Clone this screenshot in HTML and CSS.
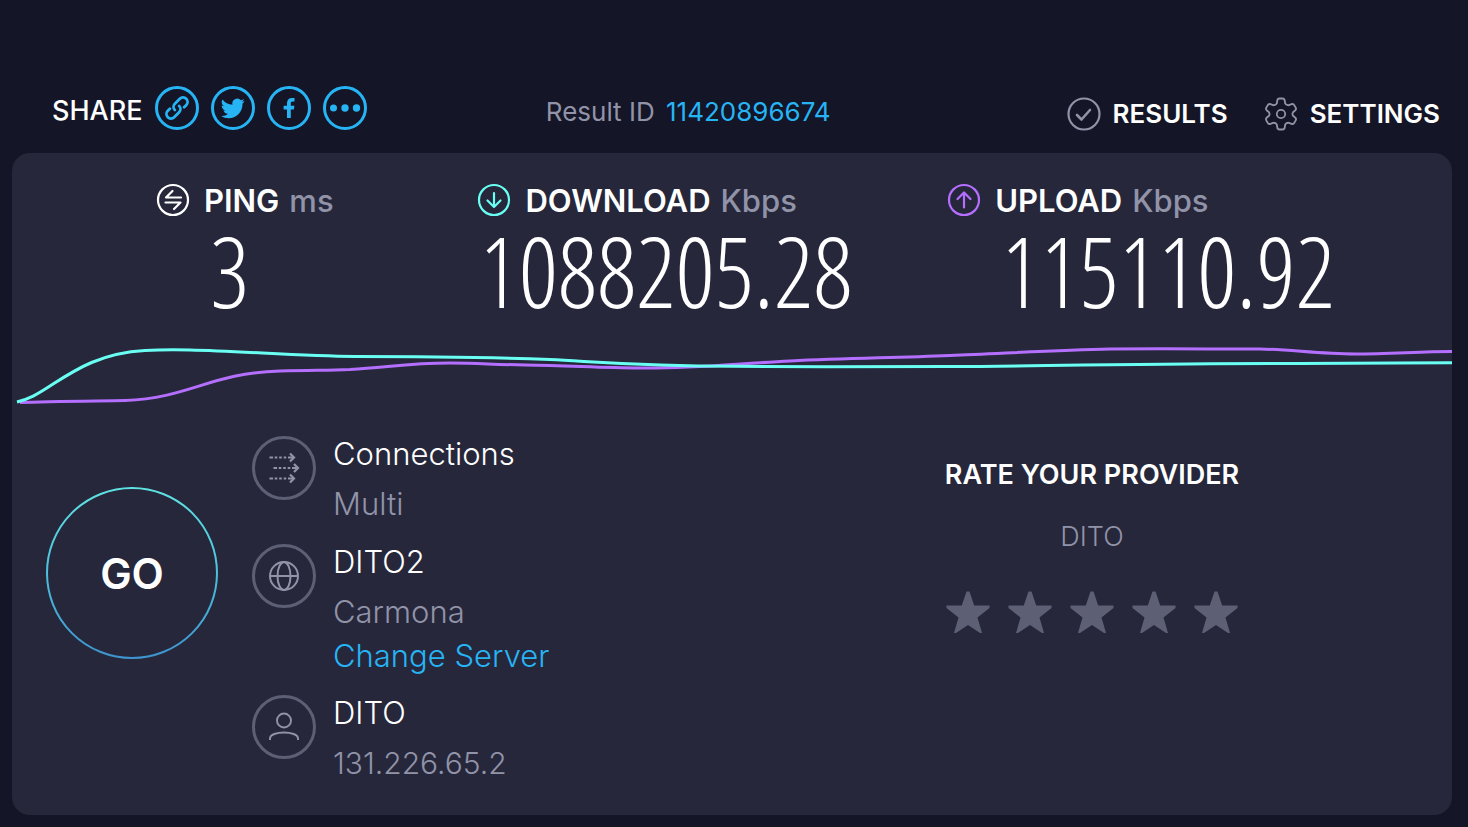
FILE: index.html
```html
<!DOCTYPE html>
<html lang="en">
<head>
<meta charset="utf-8">
<meta name="viewport" content="width=device-width, initial-scale=1">
<title>Speed test result</title>
<link rel="stylesheet" href="styles.css">
</head>
<body>
<header class="topbar">
  <div class="share">
    <span class="share-label">SHARE</span>
    <button class="share-button" type="button" aria-label="Copy link">
      <svg viewBox="0 0 46 46"><circle class="ring" cx="23" cy="23" r="20.500"/><g transform="rotate(-45 23 23)" fill="none" stroke="currentColor" stroke-width="2.800" stroke-linecap="round"><path d="M17.500 18.500H14.500a4.500 4.500 0 0 0 0 9H21.500a4.500 4.500 0 0 0 4.500-4.500"/><path d="M28.500 27.500H31.500a4.500 4.500 0 0 0 0-9H24.500a4.500 4.500 0 0 0-4.500 4.500"/></g></svg>
    </button>
    <button class="share-button" type="button" aria-label="Share on Twitter">
      <svg viewBox="0 0 46 46"><circle class="ring" cx="23" cy="23" r="20.500"/><path fill="currentColor" transform="translate(11 11)" d="M23.6 4.9a9.700 9.700 0 0 1-2.700.8 4.900 4.900 0 0 0 2.100-2.700c-1 .6-2 1-3.100 1.200a4.900 4.900 0 0 0-8.400 4.500A13.900 13.900 0 0 1 1.400 3.600a4.900 4.900 0 0 0 1.500 6.600c-.8 0-1.500-.2-2.200-.6v.1c0 2.300 1.700 4.300 3.900 4.800-.7.2-1.500.2-2.200.1.600 1.900 2.400 3.300 4.600 3.400A9.900 9.900 0 0 1 0 20a13.900 13.900 0 0 0 7.500 2.200c9.100 0 14-7.500 14-14v-.6c.9-.7 1.700-1.600 2.100-2.700z"/></svg>
    </button>
    <button class="share-button" type="button" aria-label="Share on Facebook">
      <svg viewBox="0 0 46 46"><circle class="ring" cx="23" cy="23" r="20.500"/><path fill="currentColor" d="M21 33V24.500h-3.400v-3.800H21v-2.500c0-3.500 2-5.200 5-5.200h2.500v3.500h-1.800c-1.500 0-1.900.8-1.900 1.900v2.300h3.600l-.5 3.800h-3.100V33z"/></svg>
    </button>
    <button class="share-button" type="button" aria-label="More sharing options">
      <svg viewBox="0 0 46 46"><circle class="ring" cx="23" cy="23" r="20.500"/><g fill="currentColor"><circle cx="11.500" cy="23" r="3.500"/><circle cx="23" cy="23" r="3.700"/><circle cx="34.500" cy="23" r="3.700"/></g></svg>
    </button>
  </div>
  <p class="result-id">Result ID <a href="#result">11420896674</a></p>
  <nav class="nav">
    <a class="nav-link" href="#results">
      <svg viewBox="0 0 34 34" fill="none" stroke="currentColor" stroke-linecap="round" stroke-linejoin="round"><circle cx="17" cy="17" r="15.500" stroke-width="2.200"/><path d="M10 18l4.500 4.500L23 13" stroke-width="2.600"/></svg>
      RESULTS
    </a>
    <a class="nav-link" href="#settings">
      <svg viewBox="0 0 34 34" fill="none" stroke="currentColor" stroke-width="1.800" stroke-linejoin="round"><circle cx="17" cy="17" r="4.200"/><path d="M13.300 3.500Q13.600 1.500 15.500 1.500h3Q20.400 1.500 20.700 3.500L21.200 6.500Q22.500 8.500 25 8.200L27.500 7.200Q29.400 6.500 30.300 8.200L31.700 10.600Q32.600 12.300 31.100 13.500L29 15.200Q27.900 17 29 18.800L31.100 20.500Q32.600 21.700 31.700 23.400L30.300 25.800Q29.400 27.500 27.500 26.800L25 25.800Q22.500 25.500 21.200 27.500L20.700 30.500Q20.400 32.500 18.500 32.500h-3Q13.600 32.500 13.300 30.500L12.800 27.500Q11.500 25.500 9 25.800L6.500 26.800Q4.600 27.500 3.700 25.800L2.300 23.400Q1.400 21.700 2.900 20.500L5 18.800Q6.100 17 5 15.200L2.900 13.500Q1.400 12.300 2.300 10.600L3.700 8.200Q4.600 6.500 6.500 7.200L9 8.200Q11.500 8.500 12.800 6.500z"/></svg>
      SETTINGS
    </a>
  </nav>
</header>

<main class="panel">
  <section class="metrics">
    <div class="metric">
      <h2 class="metric-title">
        <svg viewBox="0 0 34 34" fill="none" stroke="currentColor" stroke-width="2.200" stroke-linecap="round" stroke-linejoin="round"><circle cx="17" cy="17" r="15"/><path d="M25 14.500H10L16.500 8M9.500 19.500h15L18 26"/></svg>
        <span class="metric-label">PING <span class="unit">ms</span></span>
      </h2>
      <p class="metric-value">3</p>
    </div>
    <div class="metric metric-download">
      <h2 class="metric-title">
        <svg viewBox="0 0 34 34" fill="none" stroke="currentColor" stroke-width="2.200" stroke-linecap="round" stroke-linejoin="round"><circle cx="17" cy="17" r="15"/><path d="M17 10v14M10.500 17.500L17 24l6.500-6.500"/></svg>
        <span class="metric-label">DOWNLOAD <span class="unit">Kbps</span></span>
      </h2>
      <p class="metric-value">1088205.28</p>
    </div>
    <div class="metric metric-upload">
      <h2 class="metric-title">
        <svg viewBox="0 0 34 34" fill="none" stroke="currentColor" stroke-width="2.200" stroke-linecap="round" stroke-linejoin="round"><circle cx="17" cy="17" r="15"/><path d="M17 24.500v-14M10.500 16L17 9.500l6.500 6.500"/></svg>
        <span class="metric-label">UPLOAD <span class="unit">Kbps</span></span>
      </h2>
      <p class="metric-value">115110.92</p>
    </div>
  </section>

  <svg class="chart" viewBox="12 340 1440 70" preserveAspectRatio="none" fill="none" stroke-width="3" role="img" aria-label="Download and upload speed over time">
    <path stroke="#b46fff" d="M20 402.500C50 401 100 401 125 400.500C190 398 210 373 280 371C315 370 325 370.500 350 369.500C390 367 410 363 450 363C480 363 490 364.500 525 365C570 365.500 600 368 640 368C700 368.500 730 364 790 361C850 358 890 358 950 355.500C1010 353 1060 350 1110 349C1160 348.500 1210 349 1260 349C1290 349.500 1320 354 1355 354C1390 354 1420 351.500 1452 351.500"/>
    <path stroke="#6afff3" d="M17 402C30 398.500 36 395 50 386C75 370 100 353 145 350.500C160 349.700 175 349.700 190 350C240 351 300 356 355 356.500C430 356.500 480 357 550 359.500C600 362 640 366 735 366.300C810 367 870 366.500 950 366.500C1060 366 1170 363 1300 363.500C1360 363.500 1400 362.700 1452 362.700"/>
  </svg>

  <div class="details">
    <section class="connection">
      <button class="go" type="button">
        <svg class="go-ring" viewBox="0 0 172 172" fill="none" aria-hidden="true">
          <defs><linearGradient id="ring" x1="0" y1="0" x2="0" y2="1"><stop offset="0" stop-color="#5fe3e2"/><stop offset=".45" stop-color="#4fc4dd"/><stop offset="1" stop-color="#3d94ce"/></linearGradient></defs>
          <circle cx="86" cy="86" r="85" stroke="url(#ring)" stroke-width="2"/>
        </svg>
        <span>GO</span>
      </button>
      <ul class="info">
        <li class="info-item">
          <svg viewBox="0 0 64 64" fill="none"><circle class="info-ring" cx="32" cy="32" r="30.500"/><g stroke="currentColor" stroke-width="2.200"><path d="M17.500 21.500h3.500M22.700 21.500h2.600M27.200 21.500h2.600M31.700 21.500h2.600M36 21.500h6M21.500 32h3.500M26.700 32h2.600M31.200 32h2.600M35.700 32h2.600M40 32h6M17.500 42.500h3.500M22.700 42.500h2.600M27.200 42.500h2.600M31.700 42.500h2.600M36 42.500h6"/><path d="M38 17.500l4 4-4 4M42 28l4 4-4 4M38 38.500l4 4-4 4"/></g></svg>
          <div class="info-text"><span class="info-name">Connections</span><span>Multi</span></div>
        </li>
        <li class="info-item info-server">
          <svg viewBox="0 0 64 64" fill="none"><circle class="info-ring" cx="32" cy="32" r="30.500"/><g stroke="currentColor" stroke-width="2"><circle cx="32" cy="32" r="14"/><ellipse cx="32" cy="32" rx="6.500" ry="14"/><path d="M18 32h28"/></g></svg>
          <div class="info-text"><span class="info-name">DITO2</span><span>Carmona</span><a href="#servers">Change Server</a></div>
        </li>
        <li class="info-item">
          <svg viewBox="0 0 64 64" fill="none"><circle class="info-ring" cx="32" cy="32" r="30.500"/><g stroke="currentColor" stroke-width="1.900"><circle cx="32" cy="25.500" r="7"/><path d="M18 45v-1.500c0-8 28-8 28 0V45"/></g></svg>
          <div class="info-text"><span class="info-name">DITO</span><span class="info-address">131.226.65.2</span></div>
        </li>
      </ul>
    </section>
    <section class="rating">
      <h2 class="rating-title">RATE YOUR PROVIDER</h2>
      <p class="rating-name">DITO</p>
      <div class="stars">
        <button class="star" type="button" aria-label="1 star"><svg viewBox="0 0 44 43"><path d="M20.500 0.500h3L28.200 14.500H43.500V17L31.500 26.500 36 42H34L22 34 10 42H8L12.500 26.500.5 17V14.500H15.800z"/></svg></button>
        <button class="star" type="button" aria-label="2 stars"><svg viewBox="0 0 44 43"><path d="M20.500 0.500h3L28.200 14.500H43.500V17L31.500 26.500 36 42H34L22 34 10 42H8L12.500 26.500.5 17V14.500H15.800z"/></svg></button>
        <button class="star" type="button" aria-label="3 stars"><svg viewBox="0 0 44 43"><path d="M20.500 0.500h3L28.200 14.500H43.500V17L31.500 26.500 36 42H34L22 34 10 42H8L12.500 26.500.5 17V14.500H15.800z"/></svg></button>
        <button class="star" type="button" aria-label="4 stars"><svg viewBox="0 0 44 43"><path d="M20.500 0.500h3L28.200 14.500H43.500V17L31.500 26.500 36 42H34L22 34 10 42H8L12.500 26.500.5 17V14.500H15.800z"/></svg></button>
        <button class="star" type="button" aria-label="5 stars"><svg viewBox="0 0 44 43"><path d="M20.500 0.500h3L28.200 14.500H43.500V17L31.500 26.500 36 42H34L22 34 10 42H8L12.500 26.500.5 17V14.500H15.800z"/></svg></button>
      </div>
    </section>
  </div>
</main>
</body>
</html>
```
FILE: styles.css
```css
* {
  box-sizing: border-box;
}

body {
  margin: 0;
  padding: 84px 16px 12px 12px;
  background: #141526;
  color: #fff;
  font-family: Inter, "Open Sans", sans-serif;
  font-size: 26px;
}

h2, p, ul {
  margin: 0;
  padding: 0;
}

button {
  padding: 0;
  border: 0;
  background: none;
  color: inherit;
  font: inherit;
  cursor: pointer;
}

a {
  color: #27b4f5;
  text-decoration: none;
}

svg {
  display: block;
  flex: none;
}

.topbar {
  display: grid;
  grid-template-columns: 495fr 522fr auto;
  align-items: start;
  padding: 0 12px 22px 40px;
}

.share {
  display: flex;
  align-items: center;
  gap: 10px;
  padding-top: 1px;
}

.share-label {
  padding: 6px 2px 0 0;
  font-size: 27px;
  font-weight: 500;
  line-height: 32px;
}

.share-button {
  color: #27b4f5;
}

.share-button svg {
  width: 46px;
  height: 46px;
}

.ring {
  fill: none;
  stroke: currentColor;
  stroke-width: 3;
}

.result-id {
  padding-top: 12px;
  color: #9193a8;
  line-height: 32px;
}

.result-id a {
  margin-left: 4px;
}

.nav {
  display: flex;
  gap: 36px;
  padding-top: 13px;
}

.nav-link {
  display: flex;
  align-items: center;
  gap: 12px;
  color: #fff;
  font-weight: 600;
  line-height: 32px;
}

.nav-link svg {
  width: 34px;
  height: 34px;
  color: #9193a8;
}

.panel {
  border-radius: 18px;
  background: #26273b;
}

.metrics {
  display: grid;
  grid-template-columns: 321fr 469fr 504fr;
  padding: 27px 0 0 10%;
}

.metric-title {
  display: flex;
  align-items: center;
  gap: 14px;
  height: 40px;
  font-size: 31px;
  font-weight: 600;
  white-space: nowrap;
}

.metric-title svg {
  width: 34px;
  height: 34px;
}

.metric-label {
  display: flex;
  gap: 10px;
}

.metric-download svg {
  color: #6afff3;
}

.metric-upload svg {
  color: #b46fff;
}

.unit {
  color: #9193a8;
  font-weight: 500;
}

.metric-value {
  padding-left: 54px;
  height: 120px;
  font-family: "Open Sans Condensed Light", "Noto Sans ExtraCondensed Thin", "Open Sans Condensed", "Roboto Condensed Light", "Roboto Condensed", "Liberation Sans Narrow", Roboto, sans-serif;
  font-size: 98px;
  font-weight: 200;
  line-height: 100px;
}

.metric-download .metric-value {
  padding-left: 2px;
}

.chart {
  width: 100%;
  height: 70px;
}

.details {
  display: grid;
  grid-template-columns: 1fr 1fr;
  padding: 19px 0 27px;
}

.connection {
  display: flex;
  gap: 34px;
  padding-left: 34px;
}

.go {
  position: relative;
  align-self: flex-start;
  width: 172px;
  height: 172px;
  margin-top: 58px;
  font-size: 42px;
  font-weight: 600;
}

.go-ring {
  position: absolute;
  inset: 0;
}

.info {
  display: flex;
  flex-direction: column;
  gap: 8px;
  list-style: none;
}

.info-item {
  display: flex;
  gap: 17px;
  color: #9193a8;
  font-size: 31px;
  font-weight: 300;
}

.info-item svg {
  width: 64px;
  height: 64px;
  margin-top: 7px;
}

.info-ring {
  stroke: #5d5f74;
  stroke-width: 3;
}

.info-text {
  display: flex;
  flex-direction: column;
  line-height: 50px;
}

.info-name {
  color: #fff;
}

.info-address {
  font-size: 30px;
}

.info-text a {
  line-height: 38px;
}

.info-server {
  padding-bottom: 5px;
}

.rating {
  display: flex;
  flex-direction: column;
  align-items: center;
  padding-top: 26px;
}

.rating-title {
  font-size: 27px;
  font-weight: 600;
  line-height: 40px;
}

.rating-name {
  padding-top: 22px;
  color: #9193a8;
  font-size: 27px;
  font-weight: 300;
  line-height: 40px;
}

.stars {
  display: flex;
  gap: 18px;
  padding-top: 34px;
}

.star svg {
  width: 44px;
  height: 43px;
  fill: #5d5f74;
}
```
